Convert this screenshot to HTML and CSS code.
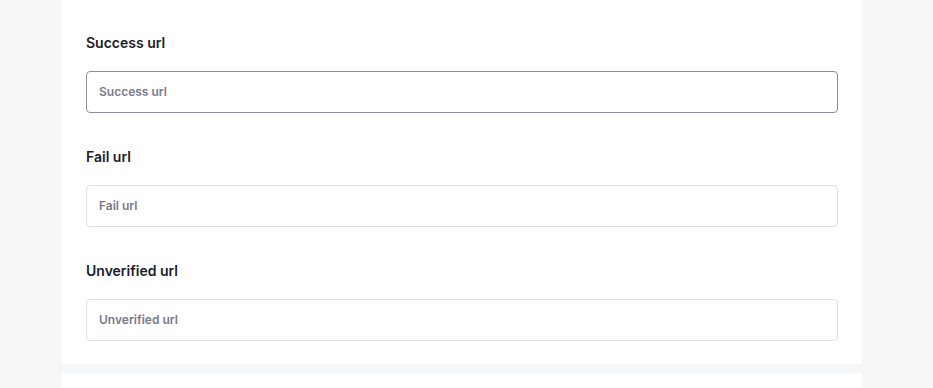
FILE: index.html
```html
<!DOCTYPE html>
<html>
<head>
<meta charset="utf-8">
<link rel="stylesheet" href="styles.css">
</head>
<body>
<div class="page">
  <div class="card">
    <div class="field">
      <label class="label">Success url</label>
      <input class="input input-active" type="text" placeholder="Success url">
    </div>
    <div class="field">
      <label class="label">Fail url</label>
      <input class="input" type="text" placeholder="Fail url">
    </div>
    <div class="field">
      <label class="label">Unverified url</label>
      <input class="input" type="text" placeholder="Unverified url">
    </div>
  </div>
  <div class="card card-next"></div>
</div>
</body>
</html>
```
FILE: styles.css
```css
html, body {
  margin: 0;
  padding: 0;
  background: #f6f7f9;
  font-family: Inter, "Noto Sans", sans-serif;
}
.page {
  width: 800px;
  margin-left: 62px;
  display: flex;
  flex-direction: column;
  gap: 9px;
}
.card {
  background: #ffffff;
  padding: 33px 24px 23px;
  display: flex;
  flex-direction: column;
  gap: 34px;
}
.card-next {
  height: 40px;
  padding: 0;
}
.field {
  display: flex;
  flex-direction: column;
  gap: 18px;
}
.label {
  font-size: 14px;
  line-height: 20px;
  font-weight: 600;
  color: #1b1c2b;
}
.input {
  box-sizing: border-box;
  height: 42px;
  width: 100%;
  border: 1px solid #dfdfea;
  border-radius: 4px;
  padding: 0 12px 2px;
  font-family: Inter, "Noto Sans", sans-serif;
  font-size: 12px;
  font-weight: 600;
  color: #1b1c2b;
  background: #fff;
  outline: none;
}
.input::placeholder {
  color: #767a8e;
}
.input-active {
  border-color: #8b8e9c;
}
```
